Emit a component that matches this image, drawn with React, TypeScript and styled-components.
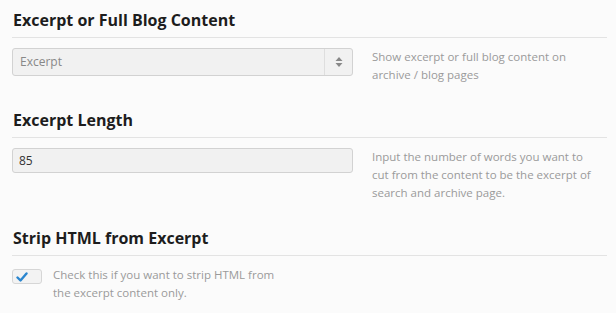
import React from "react";
import styled, { createGlobalStyle } from "styled-components";

const Global = createGlobalStyle`
  html, body { margin: 0; padding: 0; background: #fbfbfb; }
  body { font-family: "Open Sans", "Liberation Sans", sans-serif; }
`;

const Page = styled.div`
  padding: 7px 9px 0 12px;
  width: 595px;
`;

const Section = styled.section`
  & + & { margin-top: 23px; }
`;

const Heading = styled.h2`
  margin: 0;
  font-family: "Open Sans", "Liberation Sans", sans-serif;
  font-size: 16px;
  line-height: 22px;
  font-weight: 700;
  color: #1d1d1d;
  padding-top: 2px;
  padding-bottom: 6px;
  padding-left: 1px;
  border-bottom: 1px solid #e3e3e3;
`;

const Row = styled.div`
  display: flex;
  align-items: flex-start;
  margin-top: 10px;
`;

const Control = styled.div<{ $wide?: boolean }>`
  width: ${(p) => (p.$wide ? "341px" : "auto")};
  flex: none;
`;

const Desc = styled.p<{ $left: number; $width?: number }>`
  margin: 0 0 0 ${(p) => p.$left}px;
  width: ${(p) => p.$width ?? 230}px;
  font-size: 11.5px;
  line-height: 18px;
  color: #9a9a9a;
`;

const SelectBox = styled.div`
  display: flex;
  height: 26px;
  border: 1px solid #d2d2d2;
  border-radius: 3px;
  background: #f1f1f1;
  box-sizing: content-box;
`;

const SelectValue = styled.div`
  flex: 1;
  padding-left: 7px;
  font-size: 12px;
  line-height: 26px;
  color: #888;
  border-right: 1px solid #dedede;
`;

const SelectArrow = styled.div`
  width: 27px;
  display: flex;
  align-items: center;
  justify-content: center;
`;

const Input = styled.div`
  height: 23px;
  border: 1px solid #d2d2d2;
  border-radius: 3px;
  background: #f1f1f1;
  padding-left: 6px;
  font-size: 12px;
  line-height: 23px;
  color: #333;
`;

const Check = styled.div`
  margin-top: 3px;
  width: 25px;
  height: 13px;
  border: 1px solid #d6d6d6;
  border-radius: 3px;
  background: #f3f3f3;
  display: flex;
  align-items: center;
  padding-left: 3px;
  box-sizing: content-box;
`;

export default function App() {
  return (
    <>
      <Global />
      <Page>
        <Section>
          <Heading>Excerpt or Full Blog Content</Heading>
          <Row>
            <Control $wide>
              <SelectBox>
                <SelectValue>Excerpt</SelectValue>
                <SelectArrow>
                  <svg width="8" height="12" viewBox="0 0 8 12">
                    <path d="M4 1 L7.5 5 H0.5 Z" fill="#888" />
                    <path d="M4 11 L7.5 7 H0.5 Z" fill="#888" />
                  </svg>
                </SelectArrow>
              </SelectBox>
            </Control>
            <Desc $left={19}>Show excerpt or full blog content on archive / blog pages</Desc>
          </Row>
        </Section>
        <Section>
          <Heading>Excerpt Length</Heading>
          <Row>
            <Control $wide>
              <Input>85</Input>
            </Control>
            <Desc $left={19}>
              Input the number of words you want to cut from the content to be the excerpt of search and archive page.
            </Desc>
          </Row>
        </Section>
        <Section>
          <Heading>Strip HTML from Excerpt</Heading>
          <Row>
            <Control>
              <Check>
                <svg width="12" height="10" viewBox="0 0 12 10">
                  <path d="M1.5 5.5 L4.5 8.5 L10.5 1.5" stroke="#2b86cf" strokeWidth="2.4" fill="none" strokeLinecap="round" strokeLinejoin="round" />
                </svg>
              </Check>
            </Control>
            <Desc $left={11} $width={240}>
              Check this if you want to strip HTML from the excerpt content only.
            </Desc>
          </Row>
        </Section>
      </Page>
    </>
  );
}
